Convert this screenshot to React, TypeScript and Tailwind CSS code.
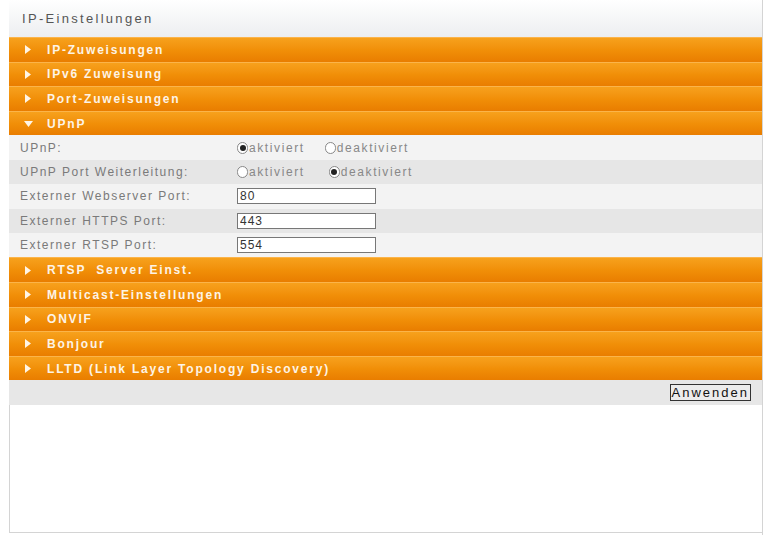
import React from "react";

const sections = ["IP-Zuweisungen", "IPv6 Zuweisung", "Port-Zuweisungen"];
const lowerSections = [
  "RTSP  Server Einst.",
  "Multicast-Einstellungen",
  "ONVIF",
  "Bonjour",
  "LLTD (Link Layer Topology Discovery)",
];

const Bar = ({ title, open }: { title: string; open?: boolean }) => (
  <div className="h-[24.6px] flex items-center border-t border-[#fbb44a] bg-gradient-to-b from-[#f7a11c] via-[#f18f08] to-[#e97d00] text-white text-[12px] font-bold tracking-[1.8px]">
    <span className="w-[38px] flex justify-center">
      {open ? (
        <svg width="9" height="6" viewBox="0 0 9 6">
          <path d="M0 0 L9 0 L4.5 6 Z" fill="#fff5e6" />
        </svg>
      ) : (
        <svg width="6" height="9" viewBox="0 0 6 9">
          <path d="M0 0 L6 4.5 L0 9 Z" fill="#fff5e6" />
        </svg>
      )}
    </span>
    <span className="whitespace-pre opacity-90">{title}</span>
  </div>
);

const Radio = ({ checked, label }: { checked?: boolean; label: string }) => (
  <span className="flex items-center gap-[1px]">
    <span className="w-[11px] h-[12px] rounded-full border border-[#888] bg-white flex items-center justify-center">
      {checked && <span className="w-[6px] h-[6px] rounded-full bg-[#222]" />}
    </span>
    <span>{label}</span>
  </span>
);

const Row = ({ label, dark, children }: { label: string; dark?: boolean; children: React.ReactNode }) => (
  <div className={`h-[24.4px] flex items-center ${dark ? "bg-[#e6e6e6]" : "bg-[#f3f3f3]"}`}>
    <span className="w-[228px] pl-[11px] text-[#7a7a7a] tracking-[1.5px]">{label}</span>
    {children}
  </div>
);

const Field = ({ value }: { value: string }) => (
  <input
    readOnly
    value={value}
    className="w-[139px] h-[16px] border border-[#777] bg-white px-[2px] text-[12px] tracking-[1px] text-[#333] outline-none"
  />
);

export default function App() {
  return (
    <div className="w-[767px] h-[535px] bg-white pl-[9px] pr-[4px] font-['Liberation_Sans',Arial,sans-serif] text-[12px]">
      <div className="h-full flex flex-col border-r border-[#d4d4d4]">
        <div className="h-[37px] flex items-center pl-[13px] bg-gradient-to-b from-white to-[#eceef0] text-[13px] tracking-[2.3px] text-[#555]">
          IP-Einstellungen
        </div>
        {sections.map((s) => (
          <Bar key={s} title={s} />
        ))}
        <Bar title="UPnP" open />
        <Row label="UPnP:">
          <div className="flex gap-[20px] text-[#888] tracking-[1.6px]">
            <Radio checked label="aktiviert" />
            <Radio label="deaktiviert" />
          </div>
        </Row>
        <Row label="UPnP Port Weiterleitung:" dark>
          <div className="flex gap-[24px] text-[#888] tracking-[1.6px]">
            <Radio label="aktiviert" />
            <Radio checked label="deaktiviert" />
          </div>
        </Row>
        <Row label="Externer Webserver Port:">
          <Field value="80" />
        </Row>
        <Row label="Externer HTTPS Port:" dark>
          <Field value="443" />
        </Row>
        <Row label="Externer RTSP Port:">
          <Field value="554" />
        </Row>
        {lowerSections.map((s) => (
          <Bar key={s} title={s} />
        ))}
        <div className="h-[25px] flex items-center justify-end pr-[11px] bg-[#e7e7e7]">
          <button className="h-[17px] px-[1px] border border-[#333] bg-[#ececec] text-[13px] tracking-[2px] leading-none text-[#111]">
            Anwenden
          </button>
        </div>
        <div className="flex-1 mb-[2px] border-l border-b border-[#d4d4d4] bg-white" />
      </div>
    </div>
  );
}
